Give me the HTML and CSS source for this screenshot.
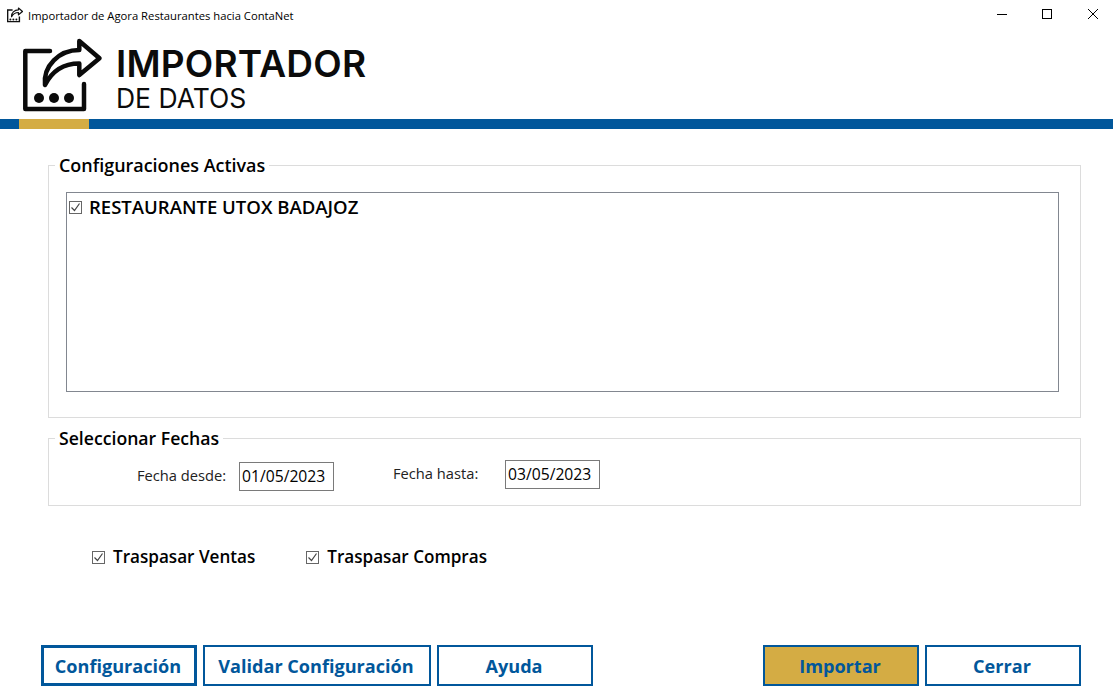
FILE: index.html
```html
<!DOCTYPE html>
<html lang="es">
<head>
<meta charset="utf-8">
<title>Importador de Agora Restaurantes hacia ContaNet</title>
<link rel="stylesheet" href="styles.css">
</head>
<body>
<div class="window">
  <div class="titlebar">
    <svg class="app-icon" viewBox="0 0 80 76" aria-hidden="true">
      <path d="M28 13H3.3V71H62V46" class="logo-line"/>
      <path d="M57.3 3L77.500 20.300L57.300 37V25.500C42 25.500 30 33 23 47C21 28 37 12 57.300 12Z" class="logo-arrow"/>
      <circle cx="17" cy="60" r="5"/><circle cx="32" cy="60" r="5"/><circle cx="47" cy="60" r="5"/>
    </svg>
    <span class="title-text">Importador de Agora Restaurantes hacia ContaNet</span>
    <div class="win-controls">
      <svg class="win-btn" viewBox="0 0 46 30" aria-hidden="true"><path d="M22 14.500H32" class="win-stroke"/></svg>
      <svg class="win-btn" viewBox="0 0 46 30" aria-hidden="true"><rect x="21.500" y="9.500" width="9" height="9" class="win-stroke"/></svg>
      <svg class="win-btn" viewBox="0 0 46 30" aria-hidden="true"><path d="M21 9L31 19M31 9L21 19" class="win-stroke"/></svg>
    </div>
  </div>

  <header class="brand">
    <svg class="logo" viewBox="0 0 80 76" aria-hidden="true">
      <path d="M28 13H3.3V71H62V46" class="logo-line"/>
      <path d="M57.3 3L77.500 20.300L57.300 37V25.500C42 25.500 30 33 23 47C21 28 37 12 57.300 12Z" class="logo-arrow"/>
      <circle cx="17" cy="60" r="5"/><circle cx="32" cy="60" r="5"/><circle cx="47" cy="60" r="5"/>
    </svg>
    <div class="brand-text">
      <div class="brand-main">IMPORTADOR</div>
      <div class="brand-sub">DE DATOS</div>
    </div>
  </header>
  <div class="stripe"><div class="stripe-accent"></div></div>

  <main class="content">
    <fieldset class="group group-active">
      <legend>Configuraciones Activas</legend>
      <div class="listbox">
        <label class="check list-item"><span class="box"><svg viewBox="0 0 11 11"><path d="M1.500 5.500L4.500 8.500L9.500 1.500"/></svg></span>RESTAURANTE UTOX BADAJOZ</label>
      </div>
    </fieldset>

    <fieldset class="group group-dates">
      <legend>Seleccionar Fechas</legend>
      <div class="dates">
        <span class="date-label from-label">Fecha desde:</span>
        <span class="date-input from-input">01/05/2023</span>
        <span class="date-label to-label">Fecha hasta:</span>
        <span class="date-input to-input">03/05/2023</span>
      </div>
    </fieldset>

    <div class="options">
      <label class="check option"><span class="box"><svg viewBox="0 0 11 11"><path d="M1.500 5.500L4.500 8.500L9.500 1.500"/></svg></span>Traspasar Ventas</label>
      <label class="check option"><span class="box"><svg viewBox="0 0 11 11"><path d="M1.500 5.500L4.500 8.500L9.500 1.500"/></svg></span>Traspasar Compras</label>
    </div>
  </main>

  <footer class="actions">
    <button class="btn btn-focus">Configuración</button>
    <button class="btn btn-wide">Validar Configuración</button>
    <button class="btn">Ayuda</button>
    <div class="spacer"></div>
    <button class="btn btn-primary">Importar</button>
    <button class="btn">Cerrar</button>
  </footer>
</div>
</body>
</html>
```

FILE: styles.css
```css
* { box-sizing: border-box; }
html, body { margin: 0; padding: 0; background: #fff; }
body { font-family: "Open Sans", "Noto Sans", sans-serif; color: #000; }
.window { width: 1113px; height: 695px; display: flex; flex-direction: column; overflow: hidden; }

.titlebar { height: 30px; display: flex; align-items: center; padding-left: 7px; flex: none; }
.app-icon { width: 16px; height: 16px; margin-right: 5px; fill: #111; flex: none; }
.app-icon .logo-line { fill: none; stroke: #111; stroke-width: 7; }
.app-icon .logo-arrow { fill: none; stroke: #111; stroke-width: 6; stroke-linejoin: round; }
.title-text { font-size: 11.250px; white-space: nowrap; color: #000; }
.win-controls { margin-left: auto; display: flex; }
.win-btn { width: 46px; height: 30px; display: block; }
.win-stroke { fill: none; stroke: #000; stroke-width: 1; }

.brand { height: 89px; flex: none; display: flex; align-items: flex-start; padding: 8px 0 0 22px; }
.logo { width: 80px; height: 76px; fill: #0b0b0b; flex: none; overflow: visible; }
.logo .logo-line { fill: none; stroke: #0b0b0b; stroke-width: 4.500; stroke-linecap: round; stroke-linejoin: round; }
.logo .logo-arrow { fill: none; stroke: #0b0b0b; stroke-width: 4.500; stroke-linejoin: round; }
.brand-text { margin-left: 14px; font-family: "Inter", "Noto Sans", sans-serif; color: #0b0b0b; }
.brand-main { font-size: 37px; font-weight: 600; letter-spacing: 0.2px; line-height: 40px; margin-top: 6px; white-space: nowrap; }
.brand-sub { font-size: 26.500px; font-weight: 400; line-height: 28px; white-space: nowrap; }

.stripe { height: 10px; background: #01579b; flex: none; padding-left: 19px; }
.stripe-accent { width: 70px; height: 10px; background: #d4ac44; }

.content { flex: 1; padding: 25px 32px 0 48px; display: flex; flex-direction: column; }
.group { margin: 0; border: 1px solid #dcdcdc; padding: 0; min-width: 0; }
.group legend { margin-left: 6px; padding: 0 4px; font-size: 17.650px; font-weight: 600; line-height: 22px; color: #000; white-space: nowrap; }
.group-active { height: 264px; padding: 16px 21px 0 17px; }
.group-active legend { margin-left: -11px; font-size: 17.950px; }
.listbox { height: 200px; border: 1px solid #828790; padding: 3px 2px; }
.check { display: flex; align-items: center; font-weight: 600; white-space: nowrap; }
.box { width: 13px; height: 13px; border: 1px solid #666; display: block; flex: none; }
.box svg { display: block; width: 11px; height: 11px; fill: none; stroke: #444; stroke-width: 1.200; }
.list-item { font-size: 18.550px; line-height: 22px; gap: 7px; }

.group-dates { height: 79px; margin-top: 9px; }
.dates { display: flex; align-items: flex-start; padding: 12px 0 0 88px; }
.date-label { color: #222; white-space: nowrap; font-size: 14.700px; }
.date-input { width: 95px; height: 29px; border: 1px solid #7a7a7a; padding-left: 2px; line-height: 27px; white-space: nowrap; font-size: 15.700px; }
.from-label { margin-top: 4px; width: 102px; }
.from-input { margin-top: 1px; }
.to-label { margin-top: 2px; width: 112px; margin-left: 59px; }
.to-input { margin-top: -1px; }

.options { display: flex; margin-top: 39px; padding-left: 44px; }
.option { font-size: 17.100px; line-height: 24px; gap: 8px; }
.option + .option { margin-left: 51px; }

.actions { flex: none; height: 41px; margin: 0 32px 9px 41px; display: flex; gap: 6px; }
.btn { width: 156px; height: 41px; background: #fff; border: 2px solid #01579b; color: #01579b; font: 700 18.100px "Open Sans", "Noto Sans", sans-serif; padding: 0 2px 0 0; }
.btn-focus { border-width: 3px; }
.btn-wide { width: 228px; }
.btn-primary { background: #d4ac44; }
.spacer { flex: 1; }
```
